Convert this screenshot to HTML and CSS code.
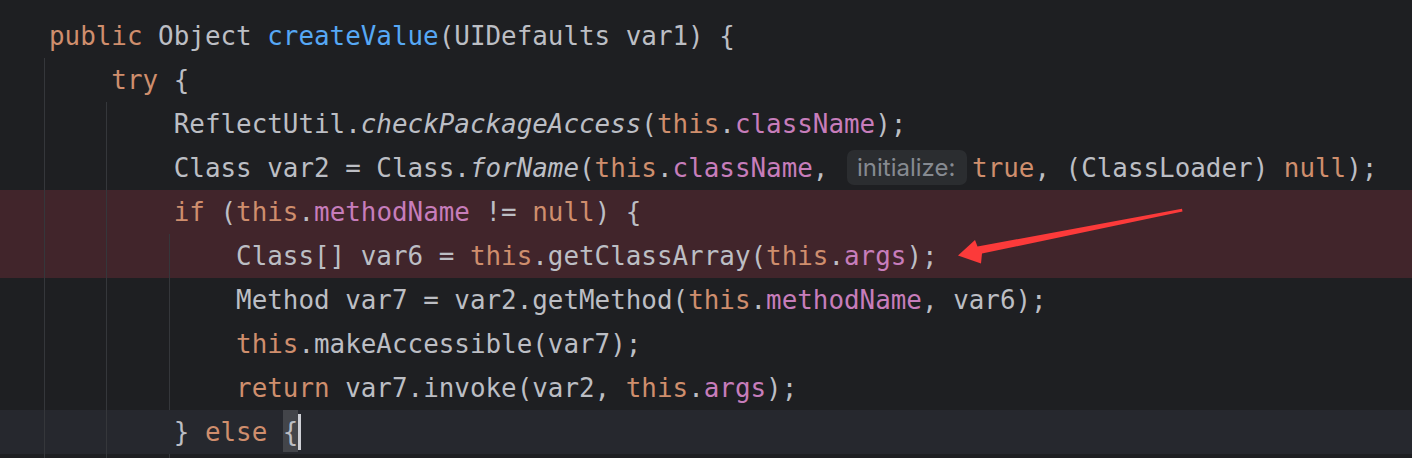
FILE: index.html
```html
<!DOCTYPE html>
<html>
<head>
<meta charset="utf-8">
<link rel="stylesheet" href="styles.css">
</head>
<body>
<div class="editor">
<div class="line"><span class="kw">public</span> Object <span class="fn">createValue</span>(UIDefaults var1) {</div>
<div class="line"><span class="g">    </span><span class="kw">try</span> {</div>
<div class="line"><span class="g">    </span><span class="g">    </span>ReflectUtil.<span class="it">checkPackageAccess</span>(<span class="kw">this</span>.<span class="fld">className</span>);</div>
<div class="line"><span class="g">    </span><span class="g">    </span>Class var2 = Class.<span class="it">forName</span>(<span class="kw">this</span>.<span class="fld">className</span>, <span class="hint">initialize:</span><span class="kw">true</span>, (ClassLoader) <span class="kw">null</span>);</div>
<div class="line hl"><span class="g">    </span><span class="g">    </span><span class="kw">if</span> (<span class="kw">this</span>.<span class="fld">methodName</span> != <span class="kw">null</span>) {</div>
<div class="line hl"><span class="g">    </span><span class="g">    </span><span class="g">    </span>Class[] var6 = <span class="kw">this</span>.getClassArray(<span class="kw">this</span>.<span class="fld">args</span>);</div>
<div class="line"><span class="g">    </span><span class="g">    </span><span class="g">    </span>Method var7 = var2.getMethod(<span class="kw">this</span>.<span class="fld">methodName</span>, var6);</div>
<div class="line"><span class="g">    </span><span class="g">    </span><span class="g">    </span><span class="kw">this</span>.makeAccessible(var7);</div>
<div class="line"><span class="g">    </span><span class="g">    </span><span class="g">    </span><span class="kw">return</span> var7.invoke(var2, <span class="kw">this</span>.<span class="fld">args</span>);</div>
<div class="line cur"><span class="g">    </span><span class="g">    </span>} <span class="kw">else</span> <span class="match">{</span><span class="caret"></span></div>
<div class="line"><span class="g">    </span><span class="g">    </span><span class="g">    </span></div>
</div>
<svg class="arrow" width="1412" height="458" viewBox="0 0 1412 458">
<polygon points="958,255.5 975,240 977.5,246.5 1182,208.8 1182.5,211.5 982,253.5 981,263.5" fill="#fc3a3a"/>
</svg>
</body>
</html>
```
FILE: styles.css
```css
html, body {
  margin: 0;
  padding: 0;
  background: #1e1f22;
  width: 1412px;
  height: 458px;
  overflow: hidden;
}

.editor {
  box-sizing: border-box;
  height: 458px;
  overflow: hidden;
  padding-top: 14px;
  font-family: "DejaVu Sans Mono", "Liberation Mono", monospace;
  font-size: 25.9px;
  color: #bcbec4;
}

.line {
  height: 44px;
  line-height: 44px;
  padding-left: 49px;
  white-space: pre;
}

.line.hl {
  background: #41252b;
}

.line.cur {
  background: #26282e;
}

.g {
  display: inline-block;
  height: 44px;
  vertical-align: top;
  border-left: 1px solid #35373b;
  margin-left: -5px;
  padding-left: 4px;
}

.kw { color: #cf8e6d; }
.fn { color: #56a8f5; }
.fld { color: #c77dbb; }
.it { font-style: italic; }

.hint {
  display: inline-block;
  vertical-align: top;
  box-sizing: border-box;
  width: 120px;
  height: 35px;
  margin: 4px 5px 0 3px;
  padding-left: 10px;
  line-height: 35px;
  border-radius: 7px;
  background: #2b2d30;
  color: #868a91;
  font-family: Inter, "Noto Sans", sans-serif;
  font-size: 24px;
}

.match {
  display: inline-block;
  vertical-align: top;
  height: 42px;
  background: #43454a;
}

.caret {
  display: inline-block;
  vertical-align: top;
  width: 3px;
  height: 36px;
  margin-top: 4px;
  background: #ced0d6;
}

.arrow {
  position: absolute;
  left: 0;
  top: 0;
  pointer-events: none;
}
```
